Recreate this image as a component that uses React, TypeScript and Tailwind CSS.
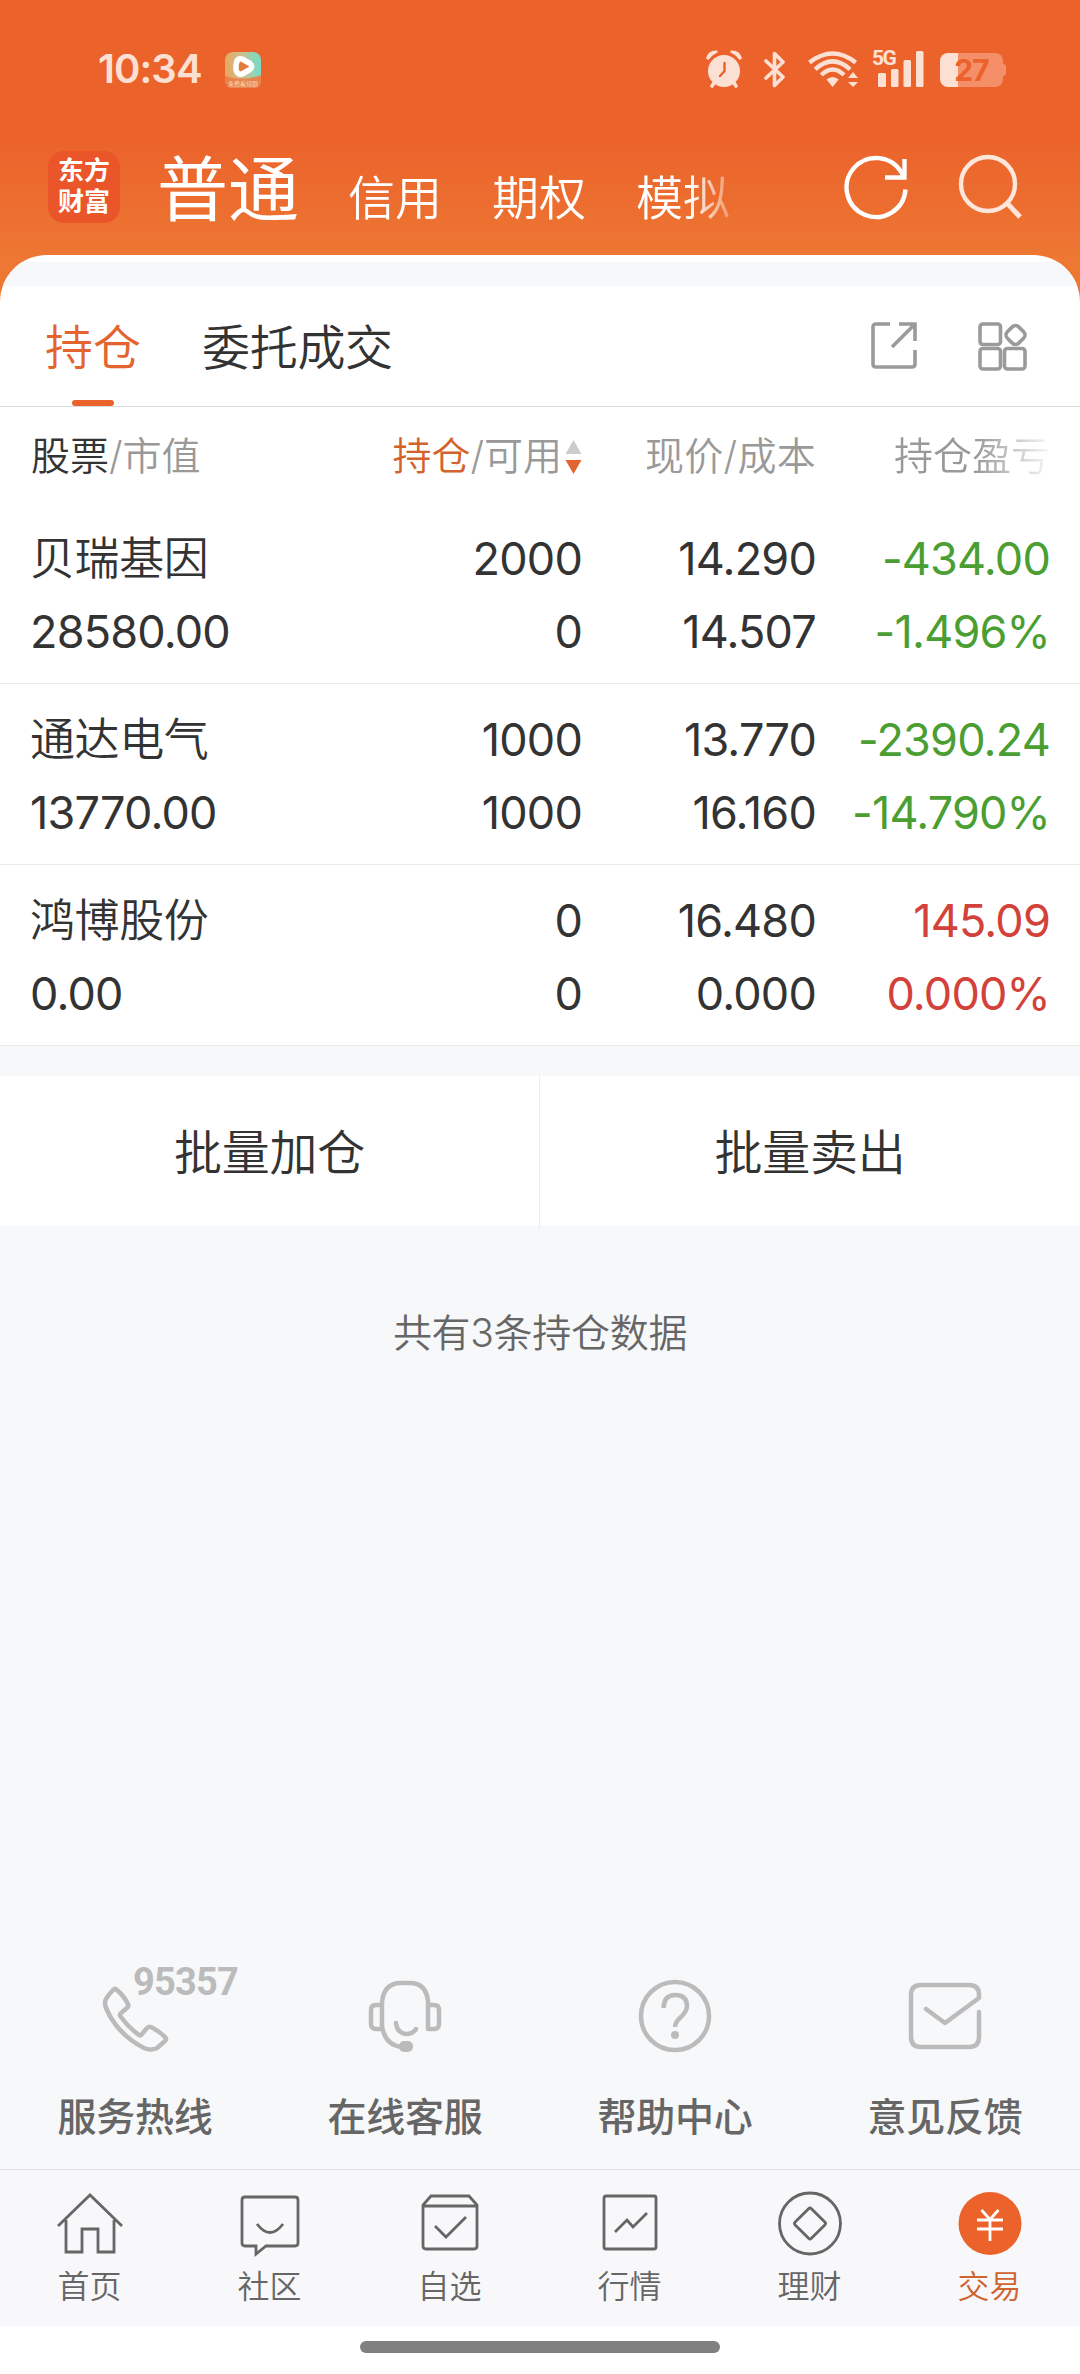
import type { ReactNode } from "react";

const holdings = [
  { name: "贝瑞基因", value: "28580.00", amount: "2000", usable: "0", price: "14.290", cost: "14.507", profit: "-434.00", rate: "-1.496%", up: false },
  { name: "通达电气", value: "13770.00", amount: "1000", usable: "1000", price: "13.770", cost: "16.160", profit: "-2390.24", rate: "-14.790%", up: false },
  { name: "鸿博股份", value: "0.00", amount: "0", usable: "0", price: "16.480", cost: "0.000", profit: "145.09", rate: "0.000%", up: true },
];

function StatusBar() {
  return (
    <div className="h-[140px] pt-[50px] pl-[98px] pr-[74px] flex items-start justify-between text-[#fde0d4]">
      <div className="flex items-start">
        <span className="w-[127px] text-[40px] leading-[37px] font-semibold tracking-[-0.9px]">10:34</span>
        <svg className="mt-[2px]" width="36" height="36" viewBox="0 0 36 36">
          <defs>
            <linearGradient id="app" x1="0" y1="0.3" x2="1" y2="0.2">
              <stop offset="0" stopColor="#e8a862" />
              <stop offset="0.5" stopColor="#c9c092" />
              <stop offset="0.85" stopColor="#83d8bf" />
            </linearGradient>
          </defs>
          <rect width="36" height="36" rx="8" fill="url(#app)" />
          <path d="M0 24Q18 30 36 23V28Q36 36 28 36H8Q0 36 0 28Z" fill="#e8834c" />
          <path d="M12.500 8Q14 6 17 7L25 11.500Q28.500 14.500 25 17.500L17 22Q12.500 23 11 18Q10.500 12 12.500 8Z" fill="#e27b3e" stroke="#fff" strokeWidth="5.500" strokeLinejoin="round" />
          <text x="18" y="34" fontSize="6" textAnchor="middle" fill="#fbe3c0">免费看短剧</text>
        </svg>
      </div>
      <div className="flex items-start">
        <svg width="38" height="38" viewBox="0 0 38 38" fill="currentColor">
          <circle cx="18" cy="21" r="16" />
          <path d="M6 36l4-6M30 36l-4-6" stroke="currentColor" strokeWidth="3.600" strokeLinecap="round" />
          <path d="M0 8.500Q2 0 11 0.500L12 2Q6 5 2.500 10ZM36 8.500Q34 0 25 0.500L24 2Q30 5 33.500 10Z" />
          <path d="M18.500 13v8l-4.500 5" fill="none" stroke="#eb632b" strokeWidth="2.400" strokeLinecap="round" />
        </svg>
        <svg className="ml-[20px] mt-px" width="22" height="37" viewBox="0 0 22 37" fill="none" stroke="currentColor" strokeWidth="3.600" strokeLinejoin="round" strokeLinecap="round">
          <path d="M2 10l17 16-8.500 8.500V2.500L19 11 2 27" />
        </svg>
        <svg className="ml-[22px] mt-px" width="52" height="37" viewBox="0 0 52 37" fill="none" stroke="currentColor" strokeWidth="4.400">
          <path d="M1.500 11.500Q24.600 -6.500 47.700 11.500M7.200 18.300Q24.600 2.500 42 18.300M13.300 24Q24.600 13 36 24" />
          <path d="M18.500 28.500Q24.600 23.500 30.700 28.500L24.600 36ZM45 21l5 6H40ZM45 36l5-5H40Z" fill="currentColor" stroke="none" />
        </svg>
        <div className="ml-[12px] relative w-[53px] h-[38px]">
          <span className="absolute left-0 top-0 font-[Roboto] text-[21px] leading-[17px] font-bold tracking-[-1.500px]">5G</span>
          <svg className="mt-px" width="53" height="37" viewBox="0 0 53 37" fill="currentColor">
            <rect x="6" y="22" width="8" height="14" rx="1.500" />
            <rect x="19" y="18" width="7.500" height="18" rx="1.500" />
            <rect x="31.500" y="9" width="7.500" height="27" rx="1.500" />
            <rect x="44" y="0" width="7.500" height="36" rx="1.500" />
          </svg>
        </div>
        <div className="ml-[15px] mt-[3px] flex items-center">
          <div className="w-[63px] h-[34px] rounded-[8px] bg-[linear-gradient(to_right,#fde0d4_18px,#f58f69_18px)] text-center text-[30px] leading-[35px] font-bold text-[#eb632b] tracking-[-1px]">27</div>
          <div className="w-[3px] h-[12px] rounded-r-[3px] bg-[#f58f69]" />
        </div>
      </div>
    </div>
  );
}

function Header() {
  return (
    <div className="h-[115px] pl-[48px] flex items-start text-white">
      <div className="mt-[11px] w-[72px] h-[72px] rounded-[16px] bg-[#ea5529] flex flex-col items-center justify-center text-[26px] leading-[31px] font-bold pb-[2px]">
        <span>东方</span>
        <span>财富</span>
      </div>
      <div className="ml-[37px] mt-[6px] text-[71px] leading-[86px] font-normal">普通</div>
      <div className="ml-[49px] mt-[25px] w-[400px] flex gap-[50px] text-[47px] leading-[66px] whitespace-nowrap [mask-image:linear-gradient(to_right,black_340px,transparent_400px)]">
        <span>信用</span>
        <span>期权</span>
        <span>模拟</span>
      </div>
      <svg className="ml-[96px] mt-[15px]" width="66" height="66" viewBox="0 0 66 66" fill="none" stroke="currentColor" strokeWidth="4.400">
        <path d="M61.500 34.500A29.500 29.500 0 1 1 57.500 17.500L60 22" />
        <path d="M60.500 4V22.500H41" />
      </svg>
      <svg className="ml-[48px] mt-[13px] text-[#fee6da]" width="64" height="68" viewBox="0 0 64 68" fill="none" stroke="currentColor" strokeWidth="4.400">
        <circle cx="30" cy="31" r="27" />
        <path d="M49 50L62 64" strokeWidth="5" />
      </svg>
    </div>
  );
}

function Tabs() {
  return (
    <div className="h-[121px] border-b border-[#dcdcdc] flex items-start text-[48px] leading-[124px]">
      <div className="ml-[45px] w-[96px] h-full flex flex-col items-center text-[#e3642e]">
        <span className="h-[114px]">持仓</span>
        <span className="w-[42px] h-[6px] rounded-full bg-[#eb632b]" />
      </div>
      <span className="ml-[61px] tracking-[-0.3px]">委托成交</span>
      <svg className="ml-auto mt-[36px]" width="48" height="48" viewBox="0 0 48 48" fill="none" stroke="#9a9a9a" strokeWidth="3.600">
        <path d="M19 2H5Q2 2 2 5V42Q2 45 5 45H41Q44 45 44 42V28" />
        <path d="M28 2H44V19M43 3L21 25" />
      </svg>
      <svg className="ml-[59px] mr-[52px] mt-[36px]" width="50" height="50" viewBox="0 0 50 50" fill="none" stroke="#9a9a9a" strokeWidth="3.600">
        <rect x="2" y="2" width="20.500" height="20.500" rx="3" />
        <rect x="2" y="26.500" width="20.500" height="20.500" rx="3" />
        <rect x="26.500" y="26.500" width="20.500" height="20.500" rx="3" />
        <rect x="29.500" y="5" width="16" height="16" rx="4.500" transform="rotate(45 37.500 13)" />
      </svg>
    </div>
  );
}

function Cell({ children, className = "" }: { children: ReactNode; className?: string }) {
  return <div className={`flex flex-col text-right font-normal tracking-[-0.8px] ${className}`}>{children}</div>;
}

function Holdings() {
  return (
    <div className="bg-white">
      <div className="h-[96px] px-[31px] grid grid-cols-[301px_250px_234px_234px] text-[39px] leading-[98px] text-[#999]">
        <div><span className="text-[#333]">股票</span>/市值</div>
        <div className="flex justify-end items-center">
          <span><span className="text-[#d4622c]">持仓</span>/可用</span>
          <svg className="ml-[3px] mt-[2px]" width="17" height="34" viewBox="0 0 17 34">
            <path d="M8.500 0L16.500 14H.5Z" fill="#ccc" />
            <path d="M8.500 34L16.500 20H.5Z" fill="#e3642e" />
          </svg>
        </div>
        <div className="text-right tracking-[0.3px]">现价/成本</div>
        <div className="text-right [mask-image:linear-gradient(to_right,black_160px,transparent_240px)]">持仓盈亏</div>
      </div>
      {holdings.map((h) => (
        <div
          key={h.name}
          className="h-[181px] pt-[19px] px-[30px] border-b border-[#ebebeb] grid grid-cols-[302px_250px_234px_234px] text-[45px] leading-[73px]"
        >
          <Cell className="text-left!">
            <span className="font-[350] tracking-[-0.4px]">{h.name}</span>
            <span>{h.value}</span>
          </Cell>
          <Cell>
            <span>{h.amount}</span>
            <span>{h.usable}</span>
          </Cell>
          <Cell>
            <span>{h.price}</span>
            <span>{h.cost}</span>
          </Cell>
          <Cell className={h.up ? "text-[#d3423a]" : "text-[#4a9e32]"}>
            <span>{h.profit}</span>
            <span>{h.rate}</span>
          </Cell>
        </div>
      ))}
    </div>
  );
}

function Support() {
  const icon = "h-[80px] w-[80px]";
  const items = [
    {
      label: "服务热线",
      art: (
        <>
          <svg className={icon} viewBox="0 0 80 80">
            <path d="M18 16Q20 14 22 16Q29 22 33 30Q34 32 32 34L26 39Q24 41 26 43Q33 53 44 61Q46 62 47 60L52 54Q54 52 56 53Q64 57 70 63Q72 65 70 67L62 74Q56 77 49 74Q22 60 11 34Q9 28 11 25Q14 20 18 16Z" />
          </svg>
          <span className="absolute left-[38px] -top-[11px] font-[Roboto] text-[38px] leading-[38px] font-bold tracking-[-0.8px] text-[#bbb]">95357</span>
        </>
      ),
    },
    {
      label: "在线客服",
      art: (
        <svg className={icon} viewBox="0 0 80 80">
          <path d="M63 31V27Q61 9 45 9H36Q19 9 17 28V52Q20 72 38 73M63 29V55H69Q74 55 74 50V36Q74 31 69 31H63M17 31H11Q6 31 6 36V50Q6 55 11 55H17" />
          <path d="M31 49Q32 59 41 60Q48 60 51 55" />
          <rect x="34" y="67" width="14" height="11" rx="5" fill="#bbb" stroke="none" />
        </svg>
      ),
    },
    {
      label: "帮助中心",
      art: (
        <svg className={icon} viewBox="0 0 80 80">
          <circle cx="40" cy="42" r="34" />
          <path d="M28.500 34Q29 21 40 21Q52 21 52 32Q52 37 46 43Q40 48 40 53" strokeLinecap="butt" />
          <circle cx="40" cy="61" r="4" fill="#bbb" stroke="none" />
        </svg>
      ),
    },
    {
      label: "意见反馈",
      art: (
        <svg className={icon} viewBox="0 0 80 80">
          <path d="M74 38V63Q74 73 64 73H16Q6 73 6 63V21Q6 11 16 11H64Q74 11 74 21V24L40 49L21 35" />
        </svg>
      ),
    },
  ];
  return (
    <div className="h-[195px] grid grid-cols-4 text-[39px] font-medium text-[#666]">
      {items.map((item) => (
        <div key={item.label} className="flex flex-col items-center">
          <div className="relative fill-none stroke-[#bbb] stroke-[4.500] [stroke-linecap:round] [stroke-linejoin:round]">{item.art}</div>
          <span className="mt-[33px] leading-[60px] tracking-[-0.3px]">{item.label}</span>
        </div>
      ))}
    </div>
  );
}

function BottomNav() {
  const tabs = [
    { label: "首页", art: <path d="M3 35L35 4L67 35M11 29V61H27V38H43V61H59V29" /> },
    {
      label: "社区",
      art: <path d="M10 6H60Q63 6 63 9V52Q63 55 60 55H31L21 63V55H10Q7 55 7 52V9Q7 6 10 6ZM22 33Q35 50 48 33" />,
    },
    {
      label: "自选",
      art: <path d="M16 5H54L62 14V55Q62 58 59 58H11Q8 58 8 55V14ZM8 15H62M20 35L31 46L51 26" />,
    },
    {
      label: "行情",
      art: <path d="M11 5H59Q61 5 61 7V56Q61 58 59 58H11Q9 58 9 56V7Q9 5 11 5ZM20 41L32 29L38 36L52 22" />,
    },
    {
      label: "理财",
      art: (
        <>
          <circle cx="35" cy="32.500" r="30.500" />
          <rect x="23.500" y="21" width="23" height="23" rx="2" transform="rotate(45 35 32.500)" />
        </>
      ),
    },
    {
      label: "交易",
      active: true,
      art: (
        <>
          <circle cx="35" cy="32.500" r="31.500" fill="#eb632b" stroke="none" />
          <path d="M26.500 19L35 28.500L43.500 19M22 29H48M22 38H48M35 28V50" stroke="#fff" />
        </>
      ),
    },
  ];
  return (
    <div className="h-[157px] pt-[21px] border-t border-[#e0e0e4] bg-[#f8f8fa] grid grid-cols-6 text-[32px] leading-[50px] text-[#666]">
      {tabs.map((tab) => (
        <div key={tab.label} className={`flex flex-col items-center ${tab.active ? "text-[#cf6430]" : ""}`}>
          <svg className="-ml-px" width="70" height="70" viewBox="0 0 70 70" fill="none" stroke="#666" strokeWidth="2.800">
            {tab.art}
          </svg>
          <span className="mt-px -ml-px">{tab.label}</span>
        </div>
      ))}
    </div>
  );
}

export default function App() {
  return (
    <div className="w-[1080px] h-[2374px] flex flex-col overflow-hidden bg-[linear-gradient(to_bottom,#eb632b_140px,#ed7733_260px)] font-[Inter,'Noto_Sans_CJK_SC',sans-serif] font-[350] text-[#333]">
      <StatusBar />
      <Header />
      <div className="flex-1 flex flex-col rounded-t-[47px] overflow-hidden bg-white">
        <div className="mt-[7px] h-[24px] bg-[#f7f8fa]" />
        <Tabs />
        <Holdings />
        <div className="flex-1 flex flex-col bg-[#f7f8fa] pt-[30px]">
          <div className="h-[150px] grid grid-cols-2 bg-white text-[48px] leading-[153px] text-center tracking-[-0.3px]">
            <div className="border-r border-[#eee]">批量加仓</div>
            <div>批量卖出</div>
          </div>
          <div className="mt-[77px] text-center text-[39px] leading-[60px] text-[#666] tracking-[-0.3px]">共有3条持仓数据</div>
          <div className="mt-auto">
            <Support />
            <BottomNav />
          </div>
        </div>
        <div className="h-[48px] pt-[15px] bg-white flex justify-center">
          <div className="w-[360px] h-[12px] rounded-full bg-[#808080]" />
        </div>
      </div>
    </div>
  );
}
